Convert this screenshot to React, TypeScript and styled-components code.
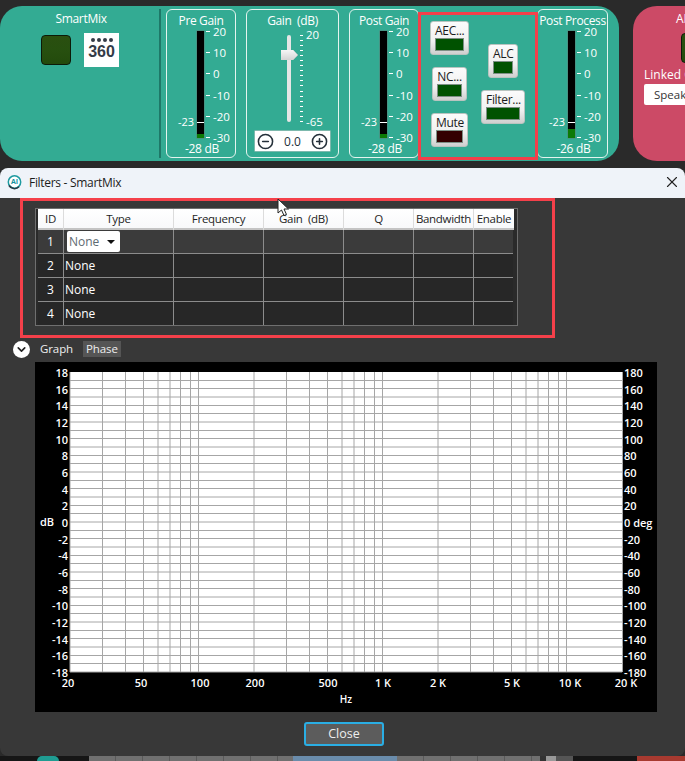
import React from "react";
import styled, { createGlobalStyle } from "styled-components";
import { CircleMinus, CirclePlus, ChevronDown, X } from "lucide-react";

const GlobalStyle = createGlobalStyle`
  html, body {
    margin: 0;
    background: #2a2a2a;
    font-family: "Open Sans", "Liberation Sans", sans-serif;
  }
  * {
    box-sizing: border-box;
  }
`;

const Page = styled.div`
  position: relative;
  width: 685px;
  height: 761px;
  overflow: hidden;
  background: #2a2a2a;
`;

const Strip = styled.div`
  display: flex;
  gap: 14px;
  height: 161px;
  padding-top: 6px;
`;

const TealPanel = styled.section`
  display: flex;
  flex: none;
  width: 619px;
  height: 155px;
  padding-top: 3px;
  background: #33ab93;
  border-radius: 22px;
  color: #fff;
`;

const SmartMixBlock = styled.div`
  width: 159px;
  height: 149px;
`;

const BlockTitle = styled.div`
  font-size: 12px;
  line-height: 20px;
  text-align: center;
  padding-left: 3px;
  letter-spacing: -0.3px;
`;

const SmartMixRow = styled.div`
  display: flex;
  align-items: center;
  gap: 13px;
  margin: 4px 0 0 41px;
`;

const SquareButton = styled.div`
  width: 30px;
  height: 30px;
  background: linear-gradient(#2a4f10, #27500f 50%, #234a0c);
  border: 1.5px solid #0c1a08;
  border-radius: 4px;
  flex: none;
`;

const Badge = styled.div`
  display: flex;
  flex-direction: column;
  align-items: center;
  width: 35px;
  height: 34px;
  padding-top: 5px;
  background: #fff;
  color: #343b47;
`;

const BadgeDots = styled.div`
  display: flex;
  gap: 2px;
`;

const BadgeDot = styled.span`
  width: 4px;
  height: 4px;
  background: #343b47;
  border-radius: 50%;
`;

const BadgeText = styled.div`
  font-family: "Liberation Sans", sans-serif;
  font-size: 16px;
  font-weight: 700;
  line-height: 20px;
`;

const Divider = styled.div`
  width: 2px;
  height: 149px;
  background: #1e7868;
`;

const CardRow = styled.div`
  display: flex;
  gap: 10px;
  margin-left: 5px;
`;

const Card = styled.div<{ $w: number }>`
  flex: none;
  width: ${(p) => p.$w}px;
  height: 149px;
  border: 1px solid #e4f4ef;
  border-radius: 6px;
`;

const CardTitle = styled.div`
  height: 21px;
  font-size: 12px;
  line-height: 22px;
  text-align: center;
  white-space: nowrap;
  letter-spacing: -0.35px;
`;

const MeterBody = styled.div`
  display: flex;
  height: 107px;
  margin-left: 30px;
`;

const MeterBar = styled.div`
  position: relative;
  flex: none;
  width: 7px;
  height: 107px;
  background: #000;
  box-shadow: 0 0 0 0.5px #5c7f76;
`;

const MeterFill = styled.div<{ $h: number }>`
  position: absolute;
  left: 0;
  right: 0;
  bottom: 0;
  height: ${(p) => p.$h}px;
  background: #0c7a06;
`;

const MeterMark = styled.div`
  position: absolute;
  left: 0;
  right: 0;
  top: 91px;
  height: 1px;
  background: #fff;
`;

const PeakLabel = styled.span`
  position: absolute;
  right: 10px;
  top: 84px;
  font-size: 11px;
  line-height: 14px;
`;

const Scale = styled.div`
  display: flex;
  flex-direction: column;
  justify-content: space-between;
  height: 121px;
  margin: -7px 0 0 2px;
`;

const ScaleRow = styled.div`
  display: flex;
  align-items: center;
  gap: 3px;
  height: 14px;
  font-size: 11.5px;
  white-space: nowrap;
`;

const Tick = styled.span`
  width: 4px;
  height: 1px;
  background: #fff;
`;

const MeterValue = styled.div`
  margin-top: 3px;
  font-size: 12px;
  line-height: 15px;
  text-align: center;
  padding-left: 2px;
  letter-spacing: -0.3px;
`;

const GainBody = styled.div`
  display: flex;
  height: 87px;
  margin: 4px 0 0 40px;
`;

const SliderTrack = styled.div`
  position: relative;
  flex: none;
  width: 4px;
  height: 87px;
  background: #e6e6e6;
  border-radius: 2px;
`;

const ThumbHolder = styled.div`
  position: absolute;
  left: -6px;
  top: 15px;
  filter: drop-shadow(0 0 0.6px #6f8a82);
`;

const SliderThumb = styled.div`
  width: 17px;
  height: 10px;
  background: linear-gradient(#f6f6f6, #d4d4d4);
  clip-path: polygon(0 0, 72% 0, 100% 50%, 72% 100%, 0 100%);
`;

const SliderTicks = styled.div`
  display: flex;
  flex-direction: column;
  justify-content: space-between;
  height: 87px;
  margin-left: 9px;
`;

const SliderTick = styled.span`
  display: block;
  width: 3px;
  height: 1px;
  background: #fff;
`;

const SliderLabels = styled.div`
  display: flex;
  flex-direction: column;
  justify-content: space-between;
  height: 101px;
  margin: -7px 0 0 3px;
  font-size: 11.5px;
  line-height: 14px;
`;

const Stepper = styled.div`
  display: flex;
  align-items: center;
  justify-content: space-between;
  width: 75px;
  height: 20px;
  margin: 9px 0 0 8px;
  padding: 0 2px;
  background: #fff;
  color: #25303a;
  font-size: 12px;
  box-shadow: 0 0 0 0.5px #c8c8c8;
`;

const ButtonGroup = styled.div`
  display: flex;
  flex: none;
  gap: 12px;
  width: 118px;
  padding-left: 11px;
`;

const ButtonColumn = styled.div<{ $top: number; $w: number }>`
  display: flex;
  flex-direction: column;
  align-items: center;
  gap: 12px;
  width: ${(p) => p.$w}px;
  padding-top: ${(p) => p.$top}px;
`;

const LedButton = styled.div<{ $w: number }>`
  width: ${(p) => p.$w}px;
  height: 34px;
  padding: 0 4px;
  background: linear-gradient(#fbfbfb, #f0f0f0 60%, #cfcfcf);
  border: 1px solid #b9c4c0;
  border-radius: 3px;
  color: #1b1b1b;
  font-size: 12px;
  line-height: 17px;
  text-align: center;
  white-space: nowrap;
  letter-spacing: -0.3px;
`;

const Led = styled.div<{ $off?: boolean }>`
  height: 13px;
  margin: -1px 0 0;
  background: ${(p) => (p.$off ? "#330000" : "#005200")};
  border: 1px solid #7d8f85;
`;

const PostProcessSlot = styled.div`
  flex: none;
`;

const PinkPanel = styled.section`
  flex: none;
  width: 120px;
  height: 155px;
  padding: 3px 0 0 11px;
  background: #cc4a66;
  border-radius: 24px 0 0 24px;
  color: #fff;
`;

const PinkTitle = styled.div`
  margin-left: 32px;
  font-size: 12px;
  line-height: 20px;
`;

const PinkSquare = styled(SquareButton)`
  margin: 4px 0 0 37px;
`;

const PinkLabel = styled.div`
  margin-top: 3px;
  font-size: 12px;
  line-height: 18px;
  white-space: nowrap;
`;

const PinkSelect = styled.div`
  width: 90px;
  height: 21px;
  padding-left: 10px;
  background: #fff;
  border-radius: 2px;
  color: #333;
  font-size: 11.5px;
  line-height: 21px;
`;

const Dialog = styled.div`
  margin-top: 7px;
  height: 588px;
  background: #383838;
  border-radius: 8px;
  overflow: hidden;
`;

const TitleBar = styled.div`
  display: flex;
  align-items: center;
  height: 30px;
  padding: 0 4px 2px 7px;
  background: #eff3f9;
  color: #1c1c1c;
`;

const TitleText = styled.div`
  flex: 1;
  margin-left: 7px;
  font-size: 12px;
  letter-spacing: -0.3px;
`;

const TableBox = styled.div`
  width: 483px;
  height: 118px;
  margin: 10px 0 0 35px;
  padding-left: 2px;
  background: #2a2a2a;
  border: 1px solid #6f6f6f;
  overflow: hidden;
`;

const COLUMNS = "26px 110px 90px 80px 70px 60px 40px";

const HeaderRow = styled.div`
  display: grid;
  grid-template-columns: ${COLUMNS};
  width: 476px;
  height: 21px;
  background: linear-gradient(#fff, #f7f8fa);
  box-shadow: inset 0 -2px 0 #c4c4c4;
`;

const HeaderCell = styled.div`
  border-right: 1px solid #dcdcdc;
  color: #1e1e1e;
  font-size: 11.5px;
  line-height: 19px;
  text-align: center;
  white-space: nowrap;
  letter-spacing: -0.3px;

  &:last-child {
    border-right: none;
  }
`;

const BodyRow = styled.div<{ $active?: boolean; $last?: boolean }>`
  display: grid;
  grid-template-columns: ${COLUMNS};
  width: 475px;
  height: ${(p) => (p.$last ? 23 : 24)}px;
  background: ${(p) => (p.$active ? "#3b3b3b" : "#272727")};
  border-bottom: ${(p) => (p.$last ? "none" : "1px solid #8c8c8c")};
`;

const BodyCell = styled.div<{ $center?: boolean }>`
  display: flex;
  align-items: center;
  justify-content: ${(p) => (p.$center ? "center" : "flex-start")};
  padding-left: ${(p) => (p.$center ? 0 : 1)}px;
  border-right: 1px solid #8c8c8c;
  color: #fff;
  font-size: 12px;

  &:last-child {
    border-right: none;
  }
`;

const TypeSelect = styled.div`
  display: flex;
  align-items: center;
  justify-content: space-between;
  width: 53px;
  height: 21px;
  margin-left: 2px;
  padding: 0 5px 0 2px;
  background: #fff;
  border-radius: 2px;
  color: #5e6a72;
`;

const Caret = styled.span`
  width: 0;
  height: 0;
  border-left: 4px solid transparent;
  border-right: 4px solid transparent;
  border-top: 4px solid #111;
`;

const TabRow = styled.div`
  display: flex;
  align-items: center;
  height: 18px;
  margin: 14px 0 0 13px;
`;

const ChevronDisc = styled.div`
  display: flex;
  align-items: center;
  justify-content: center;
  width: 17px;
  height: 17px;
  margin-right: 7px;
  background: #fff;
  border-radius: 50%;
  color: #222;
`;

const Tab = styled.div<{ $active?: boolean }>`
  height: 16px;
  margin-right: 7px;
  padding: 0 3px;
  background: ${(p) => (p.$active ? "#555" : "transparent")};
  color: #eee;
  font-size: 11.5px;
  line-height: 16px;
  letter-spacing: -0.1px;
`;

const GraphPanel = styled.div`
  width: 622px;
  height: 350px;
  margin: 4px 0 0 35px;
  background: #000;
`;

const GraphSvg = styled.svg`
  display: block;
  text {
    fill: #fff;
    font-family: "Open Sans", "Liberation Sans", sans-serif;
    font-size: 11px;
    font-weight: 600;
  }
`;

const CloseButton = styled.div`
  width: 80px;
  height: 24px;
  margin: 10px 0 0 304px;
  background: #5c5c5c;
  border: 2px solid #2aaee4;
  border-radius: 3px;
  color: #eee;
  font-size: 12.5px;
  line-height: 19px;
  text-align: center;
`;

const BottomStrip = styled.div`
  display: flex;
  height: 5px;
  background: #161616;
`;

const StripPart = styled.div<{ $w: number; $c: string; $notched?: boolean; $round?: boolean }>`
  flex: none;
  width: ${(p) => p.$w}px;
  background: ${(p) =>
    p.$notched
      ? `repeating-linear-gradient(90deg, ${p.$c} 0 26px, #5a5a5a 26px 27px)`
      : p.$c};
  border-radius: ${(p) => (p.$round ? "10px 10px 0 0" : "0")};
`;

const Highlight = styled.div<{ $x: number; $y: number; $w: number; $h: number }>`
  position: absolute;
  left: ${(p) => p.$x}px;
  top: ${(p) => p.$y}px;
  width: ${(p) => p.$w}px;
  height: ${(p) => p.$h}px;
  border: 3px solid #f4404a;
  pointer-events: none;
`;

const Pointer = styled.svg`
  position: absolute;
  left: 277px;
  top: 198px;
`;

const SCALE = ["20", "10", "0", "-10", "-20", "-30"];

function Meter({ title, value, fill, width }: { title: string; value: string; fill: number; width: number }) {
  return (
    <Card $w={width}>
      <CardTitle>{title}</CardTitle>
      <MeterBody>
        <MeterBar>
          <PeakLabel>-23</PeakLabel>
          <MeterMark />
          <MeterFill $h={fill} />
        </MeterBar>
        <Scale>
          {SCALE.map((s) => (
            <ScaleRow key={s}>
              <Tick />
              {s}
            </ScaleRow>
          ))}
        </Scale>
      </MeterBody>
      <MeterValue>{value}</MeterValue>
    </Card>
  );
}

function GainCard() {
  return (
    <Card $w={93}>
      <CardTitle>Gain&nbsp; (dB)</CardTitle>
      <GainBody>
        <SliderTrack>
          <ThumbHolder>
            <SliderThumb />
          </ThumbHolder>
        </SliderTrack>
        <SliderTicks>
          {Array.from({ length: 18 }, (_, i) => (
            <SliderTick key={i} />
          ))}
        </SliderTicks>
        <SliderLabels>
          <span>20</span>
          <span>-65</span>
        </SliderLabels>
      </GainBody>
      <Stepper>
        <CircleMinus size={17} strokeWidth={2.2} />
        0.0
        <CirclePlus size={17} strokeWidth={2.2} />
      </Stepper>
    </Card>
  );
}

const FREQ_LINES = [20, 30, 40, 50, 60, 70, 80, 90, 100, 200, 300, 400, 500, 600, 700, 800, 900, 1000, 2000, 3000, 4000, 5000, 6000, 7000, 8000, 9000, 10000, 20000];
// these land between two pixels in the original, so they read as a wider pale line
const SOFT_FREQS = [20, 60, 70, 200, 600, 700, 2000, 6000, 7000];
const FREQ_LABELS: [string, number][] = [
  ["20", 33],
  ["50", 106],
  ["100", 165],
  ["200", 220],
  ["500", 293],
  ["1 K", 348],
  ["2 K", 403],
  ["5 K", 477],
  ["10 K", 535],
  ["20 K", 591],
];

function freqX(f: number) {
  const x = 35 + 184 * Math.log10(f / 20);
  return SOFT_FREQS.includes(f) ? Math.round(x) : Math.floor(x) + 0.5;
}

function rowY(i: number) {
  const y = 10 + (i * 300) / 36;
  return i % 3 === 0 ? y : Math.floor(y) + 0.5;
}

function Graph() {
  const rows = Array.from({ length: 36 }, (_, i) => i + 1);
  const labels = Array.from({ length: 19 }, (_, i) => 18 - i * 2);
  return (
    <GraphPanel>
      <GraphSvg width={622} height={350} viewBox="0 0 622 350">
        <rect x={35} y={10} width={552} height={300} fill="#fff" />
        {rows.map((i) => (
          <line key={i} x1={35} x2={587} y1={rowY(i)} y2={rowY(i)} stroke="#a6a6a6" strokeWidth={1} />
        ))}
        {FREQ_LINES.map((f) => (
          <line key={f} x1={freqX(f)} x2={freqX(f)} y1={10} y2={310} stroke="#a6a6a6" strokeWidth={1} />
        ))}
        {labels.map((v, i) => (
          <text key={v} x={33} y={15 + (i * 300) / 18} textAnchor="end">
            {v}
          </text>
        ))}
        {labels.map((v, i) => (
          <text key={v} x={589} y={15 + (i * 300) / 18}>
            {v === 0 ? "0 deg" : v * 10}
          </text>
        ))}
        <text x={5} y={164}>
          dB
        </text>
        {FREQ_LABELS.map(([t, x]) => (
          <text key={t} x={x} y={325} textAnchor="middle">
            {t}
          </text>
        ))}
        <text x={311} y={341} textAnchor="middle" style={{ fontSize: 10 }}>
          Hz
        </text>
      </GraphSvg>
    </GraphPanel>
  );
}

function AppIcon() {
  return (
    <svg width="15" height="16" viewBox="0 0 15 16">
      <circle cx="7.5" cy="8" r="6.2" fill="#fff" stroke="#1e9aa0" strokeWidth="1.5" />
      <path d="M2 11.5 A6.4 6.4 0 0 0 12 12.8" fill="none" stroke="#2a3a44" strokeWidth="1.5" />
      <text x="7.5" y="10" textAnchor="middle" fill="#1591a0" fontSize="7" fontWeight="700" fontFamily="Open Sans, sans-serif">
        AI
      </text>
    </svg>
  );
}

const ROWS = ["1", "2", "3", "4"];
const HEADERS = ["ID", "Type", "Frequency", "Gain\u00a0 (dB)", "Q", "Bandwidth", "Enable"];

function FilterTable() {
  return (
    <TableBox>
      <HeaderRow>
        {HEADERS.map((h) => (
          <HeaderCell key={h}>{h}</HeaderCell>
        ))}
      </HeaderRow>
      {ROWS.map((id, i) => (
        <BodyRow key={id} $active={i === 0} $last={i === 3}>
          <BodyCell $center>{id}</BodyCell>
          <BodyCell>
            {i === 0 ? (
              <TypeSelect>
                None
                <Caret />
              </TypeSelect>
            ) : (
              "None"
            )}
          </BodyCell>
          <BodyCell />
          <BodyCell />
          <BodyCell />
          <BodyCell />
          <BodyCell />
        </BodyRow>
      ))}
    </TableBox>
  );
}

export default function App() {
  return (
    <Page>
      <GlobalStyle />
      <Strip>
        <TealPanel>
          <SmartMixBlock>
            <BlockTitle>SmartMix</BlockTitle>
            <SmartMixRow>
              <SquareButton />
              <Badge>
                <BadgeDots>
                  <BadgeDot />
                  <BadgeDot />
                  <BadgeDot />
                  <BadgeDot />
                </BadgeDots>
                <BadgeText>360</BadgeText>
              </Badge>
            </SmartMixRow>
          </SmartMixBlock>
          <Divider />
          <CardRow>
            <Meter title="Pre Gain" value="-28 dB" fill={4} width={70} />
            <GainCard />
            <Meter title="Post Gain" value="-28 dB" fill={4} width={70} />
          </CardRow>
          <ButtonGroup>
            <ButtonColumn $top={12} $w={39}>
              <LedButton $w={39}>
                AEC...
                <Led />
              </LedButton>
              <LedButton $w={35}>
                NC...
                <Led />
              </LedButton>
              <LedButton $w={37}>
                Mute
                <Led $off />
              </LedButton>
            </ButtonColumn>
            <ButtonColumn $top={35} $w={44}>
              <LedButton $w={30}>
                ALC
                <Led />
              </LedButton>
              <LedButton $w={44}>
                Filter...
                <Led />
              </LedButton>
            </ButtonColumn>
          </ButtonGroup>
          <PostProcessSlot>
            <Meter title="Post Process" value="-26 dB" fill={9} width={71} />
          </PostProcessSlot>
        </TealPanel>
        <PinkPanel>
          <PinkTitle>AI</PinkTitle>
          <PinkSquare />
          <PinkLabel>Linked Group</PinkLabel>
          <PinkSelect>Speaker</PinkSelect>
        </PinkPanel>
      </Strip>
      <Dialog>
        <TitleBar>
          <AppIcon />
          <TitleText>Filters - SmartMix</TitleText>
          <X size={18} strokeWidth={1.5} color="#222" />
        </TitleBar>
        <FilterTable />
        <TabRow>
          <ChevronDisc>
            <ChevronDown size={13} strokeWidth={3} />
          </ChevronDisc>
          <Tab>Graph</Tab>
          <Tab $active>Phase</Tab>
        </TabRow>
        <Graph />
        <CloseButton>Close</CloseButton>
      </Dialog>
      <BottomStrip>
        <StripPart $w={37} $c="#161616" />
        <StripPart $w={22} $c="#1f9c92" $round />
        <StripPart $w={30} $c="#161616" />
        <StripPart $w={204} $c="#707070" $notched />
        <StripPart $w={104} $c="#6a8cab" />
        <StripPart $w={143} $c="#707070" $notched />
        <StripPart $w={6} $c="#333" />
        <StripPart $w={10} $c="#999" />
        <StripPart $w={17} $c="#555" />
        <StripPart $w={64} $c="#161616" />
        <StripPart $w={48} $c="#a83a30" />
      </BottomStrip>
      <Highlight $x={418} $y={12} $w={120} $h={148} />
      <Highlight $x={20} $y={198} $w={535} $h={140} />
      <Pointer width="13" height="19" viewBox="0 0 13 19">
        <path d="M1 1 L1 15 L4.5 12 L7 17.5 L9.5 16.5 L7 11 L11.5 11 Z" fill="#fff" stroke="#222" strokeWidth="1" />
      </Pointer>
    </Page>
  );
}
